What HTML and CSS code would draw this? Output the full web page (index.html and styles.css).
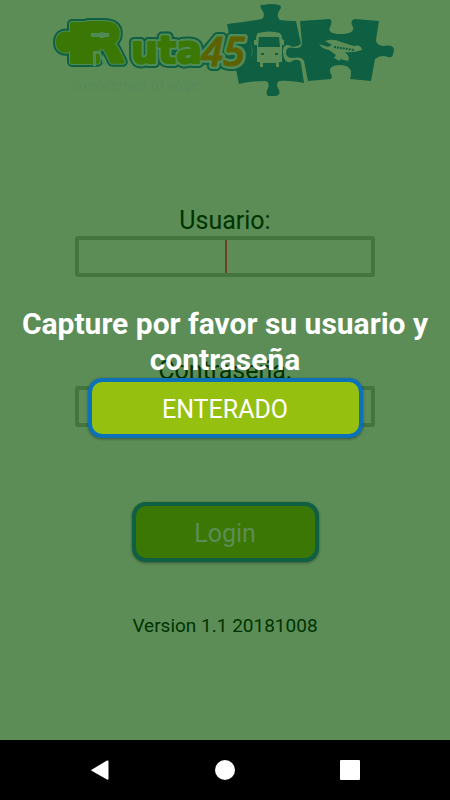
FILE: index.html
```
<!DOCTYPE html>
<html lang="es">
<head>
<meta charset="utf-8">
<meta name="viewport" content="width=device-width, initial-scale=1">
<title>Ruta45</title>
<link rel="stylesheet" href="styles.css">
</head>
<body>
<main class="screen">
  <form class="login">
    <svg class="logo" viewBox="0 0 350 100" role="img" aria-label="Ruta45">
      <!-- puzzle pieces -->
      <g class="piece">
        <path d="M177 24Q197 22 212 19Q216 15 212 10Q208 4 214 5Q221 3 229 5Q233 6 229 11Q226 17 230 20Q237 21 246 21L251 44Q247 47 243 47C237 43 233 45 233 51C233 61 238 65 244 60Q250 59 251 63L254 83Q238 80 229 81Q225 84 229 90Q231 95 226 96H218Q215 94 218 88Q220 82 215 81Q201 81 189 84L185 65Z"/>
        <path d="M250 21Q265 20 280 19Q283 21 280 27Q277 34 290 34Q305 34 303 27Q299 20 305 19L329 21L326 40Q326 45 333 46Q344 44 344 50Q343 59 338 57Q331 54 325 59L321 81L300 79Q301 77 301 71Q299 65 290 65Q279 65 280 72Q283 77 281 79L258 81L254 61Q252 56 243 58Q236 58 236 53Q236 46 244 48Q252 49 252 43Z"/>
      </g>
      <!-- coach -->
      <g class="cutout">
        <path d="M208 33Q220 30 230 33Q232 35 232 39L234 40V45H232V62H229V67H226V63H213V67H210V62H207V45H204V40H206Q206 35 208 33Z"/>
        <path d="M200 43Q204 51 200 59Q205 51 200 43Z"/>
      </g>
      <path class="piece" d="M209 37H229L230 47H208ZM211 53h3v2h-3zM225 53h3v2h-3z"/>
      <!-- plane -->
      <path class="cutout" d="M269 44L278 47L282 45L275 41Q283 38 291 42L304 46Q311 44 312 50Q303 53 295 52Q301 58 298 61L290 59V61L284 58L286 55L279 50Q272 49 269 44Z"/>
      <path class="windows" d="M284 47L304 50"/>
      <!-- wordmark -->
      <g class="rim">
        <path d="M46 24H22V36C16 31 8 34 8 42C8 51 16 53 22 48V62H40V40H46Z"/>
        <text class="cap" x="33" y="62">R</text>
        <text class="mid" x="81" y="63">uta</text>
        <text class="num" x="151" y="66">45</text>
      </g>
      <g class="halo">
        <path d="M46 24H22V36C16 31 8 34 8 42C8 51 16 53 22 48V62H40V40H46Z"/>
        <text class="cap" x="33" y="62">R</text>
        <text class="mid" x="81" y="63">uta</text>
        <text class="num" x="151" y="66">45</text>
      </g>
      <g class="face">
        <path d="M46 24H22V36C16 31 8 34 8 42C8 51 16 53 22 48V62H40V40H46Z"/>
        <text class="cap" x="33" y="62">R</text>
        <text class="mid" x="81" y="63">uta</text>
        <text class="num" x="151" y="66">45</text>
      </g>
      <path class="slot" d="M41 33H59V37H41Z"/>
      <path class="slot" d="M43 66V51H50L57 66H54L49 54H46V66Z"/>
      <text class="tagline" x="22" y="90">conocemos tu viaje</text>
    </svg>
    <div class="field">
      <label for="user">Usuario:</label>
      <div class="box"><input id="user" type="text"><span class="caret"></span></div>
    </div>
    <div class="field">
      <label for="pass">Contraseña:</label>
      <div class="box"><input id="pass" type="password"></div>
    </div>
    <button class="btn submit" type="button">Login</button>
    <p class="version">Version 1.1 20181008</p>
  </form>
  <div class="dialog" role="alertdialog" aria-labelledby="message">
    <p id="message" class="message">Capture por favor su usuario y contraseña</p>
    <button class="btn accept" type="button">ENTERADO</button>
  </div>
</main>
<nav class="navbar">
  <button type="button" aria-label="Atrás"><svg viewBox="0 0 20 20"><path d="M2 9.500L17 .5Q18.500 0 18.500 1.500V18.500Q18.500 20 17 19.500L2 11Q.5 10 2 9.500Z"/></svg></button>
  <button type="button" aria-label="Inicio"><svg viewBox="0 0 20 20"><circle cx="10" cy="10" r="10"/></svg></button>
  <button type="button" aria-label="Recientes"><svg viewBox="0 0 20 20"><rect width="20" height="20" rx="1"/></svg></button>
</nav>
</body>
</html>
```
FILE: styles.css
```
* { box-sizing: border-box; }

body {
  margin: 0;
  min-height: 100vh;
  display: flex;
  flex-direction: column;
  background: #5c8d57;
  color: #003300;
  font-family: Roboto, sans-serif;
}

button, input { font: inherit; }

.screen {
  position: relative;
  flex: 1;
}

.login {
  display: flex;
  flex-direction: column;
  align-items: center;
}

.logo {
  width: 78%;
  max-width: 350px;
  margin-bottom: 106px;
}

.field {
  width: 300px;
  max-width: 90%;
  font-size: 25px;
  line-height: 30px;
  text-align: center;
}

.field + .field { margin-top: 79px; }

.field label { display: block; }

.box { position: relative; }

.box input {
  display: block;
  width: 100%;
  height: 41px;
  padding: 0 8px;
  border: 4px solid #44743f;
  border-radius: 3px;
  background: transparent;
  color: inherit;
  text-align: center;
  outline: none;
}

.caret {
  position: absolute;
  left: 50%;
  top: 4px;
  bottom: 4px;
  width: 2px;
  background: #6f4026;
}

.btn {
  height: 60px;
  padding: 2px 0 0;
  border-radius: 14px;
  font-size: 25px;
  box-shadow: 0 1px 3px rgba(0, 0, 0, .4);
}

.submit {
  width: 187px;
  margin-top: 75px;
  border: 4px solid #0f6043;
  background: #3b7705;
  color: #5c8d57;
}

.version {
  margin: 52px 0 0;
  font-size: 19px;
  line-height: 24px;
}

.dialog {
  position: absolute;
  inset: 0;
  display: flex;
  flex-direction: column;
  align-items: center;
  justify-content: center;
  padding: 4px 15px 0;
}

.message {
  margin: 0;
  color: #fff;
  font-size: 30px;
  font-weight: 700;
  line-height: 36px;
  text-align: center;
}

.accept {
  width: 275px;
  max-width: 100%;
  border: 4px solid #0b72b9;
  background: #96c010;
  color: #fff;
}

.navbar {
  display: flex;
  justify-content: space-between;
  align-items: center;
  height: 60px;
  padding: 0 20%;
  background: #000;
}

.navbar button {
  padding: 0;
  border: 0;
  background: none;
}

.navbar svg {
  display: block;
  width: 20px;
  height: 20px;
  fill: #fff;
}

.piece { fill: #0f6043; }
.cutout { fill: #5c8d57; }
.windows { fill: none; stroke: #0f6043; stroke-width: 2; stroke-dasharray: 2 1; }
.slot { fill: #4f8b55; }

.cap { font: 700 53px "DejaVu Sans", sans-serif; }
.mid { font: 700 38px "DejaVu Sans", sans-serif; }
.num { font: italic 600 40px "Open Sans", sans-serif; }

.rim, .halo, .face { stroke-linejoin: round; }
.rim { fill: #0f6043; stroke: #0f6043; stroke-width: 10; }
.halo { fill: #4f8b55; stroke: #4f8b55; stroke-width: 6; }
.face { fill: #3b7705; stroke: #3b7705; stroke-width: 4; }
.face .mid { stroke-width: 2; }
.face .num { fill: #5d6200; stroke: #5d6200; stroke-width: 1; }

.tagline { fill: #56895a; font: italic 15px "Open Sans", sans-serif; }
```
